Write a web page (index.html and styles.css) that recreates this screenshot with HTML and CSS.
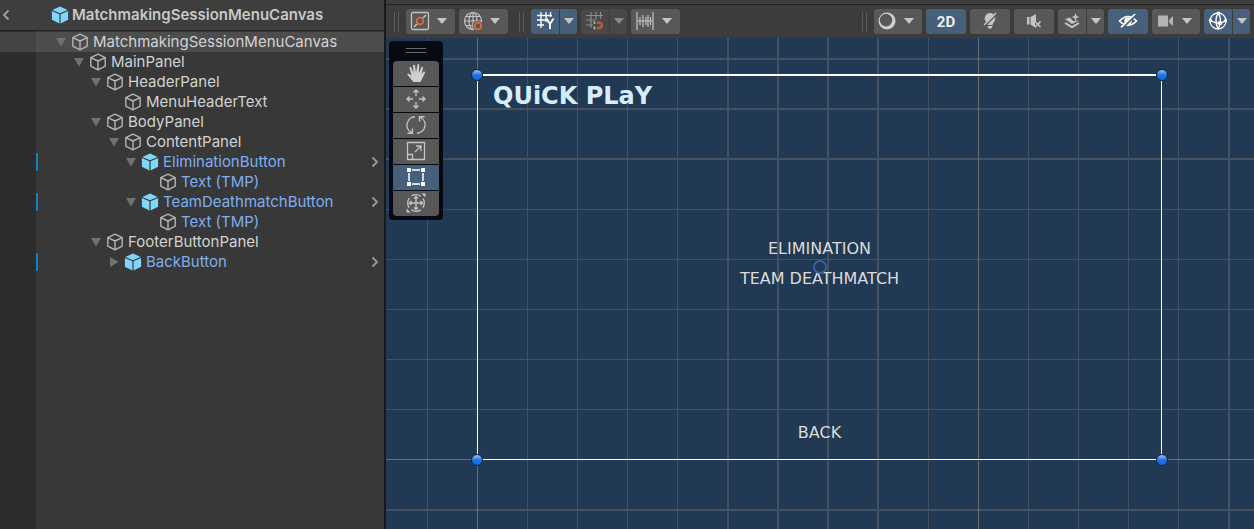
FILE: index.html
```html
<!DOCTYPE html>
<html lang="en">
<head>
<meta charset="utf-8">
<title>MatchmakingSessionMenuCanvas</title>
<link rel="stylesheet" href="styles.css">
</head>
<body>
<svg class="defs" aria-hidden="true">
  <symbol id="cube" viewBox="0 0 18 18"><path d="M9 1.2 16.2 4.6V13.2L9 16.8 1.8 13.2V4.6ZM1.8 4.6 9 8 16.2 4.6M9 8V16.8" fill="none" stroke="#b4b4b4" stroke-width="1.4" stroke-linejoin="round"/></symbol>
  <symbol id="prefab" viewBox="0 0 18 18"><path d="M9 .4 16.6 3.9 9 7.3 1.4 3.9ZM.9 5 8.4 8.3V17.5L.9 13.8ZM17.1 5 9.6 8.3V17.5L17.1 13.8Z" fill="#7fd6fd"/></symbol>
  <symbol id="down" viewBox="0 0 12 12"><path d="M1 2H11L6 10.500Z" fill="currentColor"/></symbol>
  <symbol id="right" viewBox="0 0 12 12"><path d="M2 1V11L10.500 6Z" fill="currentColor"/></symbol>
  <symbol id="chevron" viewBox="0 0 8 12"><path d="M1.500 1.500 6 6 1.500 10.500" fill="none" stroke="currentColor" stroke-width="1.800"/></symbol>
  <symbol id="caret" viewBox="0 0 12 8"><path d="M1 1H11L6 7Z" fill="currentColor"/></symbol>
</svg>
<div class="editor">
  <aside class="hierarchy">
    <header class="crumb">
      <button class="back" aria-label="Back"><svg class="chev flip"><use href="#chevron"/></svg></button>
      <svg class="icon"><use href="#prefab"/></svg>
      <h1 class="crumb-name">MatchmakingSessionMenuCanvas</h1>
    </header>
    <ul class="tree">
      <li class="row selected"><button class="fold" aria-label="Collapse"><svg><use href="#down"/></svg></button><svg class="icon"><use href="#cube"/></svg><span>MatchmakingSessionMenuCanvas</span></li>
      <li class="row level-1"><button class="fold" aria-label="Collapse"><svg><use href="#down"/></svg></button><svg class="icon"><use href="#cube"/></svg><span>MainPanel</span></li>
      <li class="row level-2"><button class="fold" aria-label="Collapse"><svg><use href="#down"/></svg></button><svg class="icon"><use href="#cube"/></svg><span>HeaderPanel</span></li>
      <li class="row level-3"><i class="fold"></i><svg class="icon"><use href="#cube"/></svg><span>MenuHeaderText</span></li>
      <li class="row level-2"><button class="fold" aria-label="Collapse"><svg><use href="#down"/></svg></button><svg class="icon"><use href="#cube"/></svg><span>BodyPanel</span></li>
      <li class="row level-3"><button class="fold" aria-label="Collapse"><svg><use href="#down"/></svg></button><svg class="icon"><use href="#cube"/></svg><span>ContentPanel</span></li>
      <li class="row level-4 prefab changed"><button class="fold" aria-label="Collapse"><svg><use href="#down"/></svg></button><svg class="icon"><use href="#prefab"/></svg><span>EliminationButton</span><button class="open" aria-label="Open prefab"><svg class="chev"><use href="#chevron"/></svg></button></li>
      <li class="row level-5 prefab"><i class="fold"></i><svg class="icon"><use href="#cube"/></svg><span>Text (TMP)</span></li>
      <li class="row level-4 prefab changed"><button class="fold" aria-label="Collapse"><svg><use href="#down"/></svg></button><svg class="icon"><use href="#prefab"/></svg><span>TeamDeathmatchButton</span><button class="open" aria-label="Open prefab"><svg class="chev"><use href="#chevron"/></svg></button></li>
      <li class="row level-5 prefab"><i class="fold"></i><svg class="icon"><use href="#cube"/></svg><span>Text (TMP)</span></li>
      <li class="row level-2"><button class="fold" aria-label="Collapse"><svg><use href="#down"/></svg></button><svg class="icon"><use href="#cube"/></svg><span>FooterButtonPanel</span></li>
      <li class="row level-3 prefab changed"><button class="fold" aria-label="Expand"><svg><use href="#right"/></svg></button><svg class="icon"><use href="#prefab"/></svg><span>BackButton</span><button class="open" aria-label="Open prefab"><svg class="chev"><use href="#chevron"/></svg></button></li>
    </ul>
  </aside>

  <main class="scene">
    <div class="toolbar">
      <div class="group">
        <i class="grip"></i>
        <button class="tool menu" aria-label="Pivot"><svg class="glyph" viewBox="0 0 20 20"><rect x="1.500" y="1.500" width="17" height="17" rx="1.500" fill="none" stroke="#c4c4c4" stroke-width="1.300"/><path d="M4 16 7 13M13 7 16 4" stroke="#c4c4c4" stroke-width="1.500"/><circle cx="10" cy="10" r="3.300" fill="none" stroke="#e5673f" stroke-width="1.700"/></svg><svg class="caret"><use href="#caret"/></svg></button>
        <button class="tool menu" aria-label="Handle rotation"><svg class="glyph" viewBox="0 0 20 20"><g fill="none" stroke="#c4c4c4" stroke-width="1.200"><circle cx="10" cy="10" r="8.500"/><ellipse cx="10" cy="10" rx="4" ry="8.500"/><path d="M1.500 10H18.500M3 5.500H17M3 14.500H12M10 1.500V18.500"/></g><circle cx="15" cy="15" r="5" fill="#585858"/><circle cx="15" cy="15" r="3.300" fill="none" stroke="#e5673f" stroke-width="1.800"/></svg><svg class="caret"><use href="#caret"/></svg></button>
      </div>
      <div class="group">
        <i class="grip"></i>
        <div class="split active"><button class="tool" aria-label="Grid"><svg class="glyph" viewBox="0 0 20 20"><path d="M6 1V17M11 1V11M15.500 1V6M2 4.500H17M2 9H12M2 14H9" fill="none" stroke="#fff" stroke-width="1.300"/><path d="M11.500 7.500 15 13 18.500 7.500M15 13V18" fill="none" stroke="#fff" stroke-width="2"/></svg></button><button class="tool drop" aria-label="Grid options"><svg class="caret"><use href="#caret"/></svg></button></div>
        <div class="split dim"><button class="tool" aria-label="Grid snapping"><svg class="glyph" viewBox="0 0 20 20"><path d="M6 1V17M11 1V9M15.500 1V8M1 4.500H18M1 9H10M1 14H8" fill="none" stroke="#8c8c8c" stroke-width="1.200"/><path d="M12 11.500H14.500A2.800 2.800 0 0 1 14.500 17H12" fill="none" stroke="#b05840" stroke-width="2.800"/><path d="M8.500 10.200H10.500V13H8.500ZM8.500 15.500H10.500V18.300H8.500Z" fill="#aaa"/></svg></button><button class="tool drop" aria-label="Snapping options"><svg class="caret"><use href="#caret"/></svg></button></div>
        <button class="tool menu" aria-label="Increment snap"><svg class="glyph" viewBox="0 0 20 20"><path d="M2 1V19M18 1V19M5 6V14M8 4V16M11 6V14M13 4V16M15.500 6V14M2 10H18" fill="none" stroke="#c4c4c4" stroke-width="1.200"/></svg><svg class="caret"><use href="#caret"/></svg></button>
      </div>
      <div class="group end">
        <i class="grip"></i>
        <button class="tool menu" aria-label="Draw mode"><svg class="glyph" viewBox="0 0 20 20"><path fill-rule="evenodd" d="M10 1.500A8.500 8.500 0 1 1 10 18.500 8.500 8.500 0 0 1 10 1.500M9 2.800A6.300 6.300 0 1 0 9 15.400 6.300 6.300 0 0 0 9 2.800" fill="#d0d0d0"/></svg><svg class="caret"><use href="#caret"/></svg></button>
        <button class="tool active two-d">2D</button>
        <button class="tool" aria-label="Lighting"><svg class="glyph" viewBox="0 0 20 20"><path d="M10 2A5.500 5.500 0 0 1 13.500 11.500L12.500 14H7.500L6.500 11.500A5.500 5.500 0 0 1 10 2M7.500 15H12.500L11.500 17.500H8.500Z" fill="#c4c4c4"/><path d="M5 15 17 3" stroke="#585858" stroke-width="1.500"/><path d="M4 14 16 2" stroke="#c4c4c4" stroke-width="1.500"/></svg></button>
        <button class="tool" aria-label="Audio"><svg class="glyph" viewBox="0 0 20 20"><path d="M3 6H5.500V13.500H3ZM6.500 6 12 3V17L6.500 13.500Z" fill="#c4c4c4"/><path d="M11 10.500H17V16.500H11Z" fill="#585858"/><path d="M11 10.500 16.500 16M16.500 10.500 11 16" stroke="#c4c4c4" stroke-width="1.600"/></svg></button>
        <div class="split"><button class="tool" aria-label="Effects"><svg class="glyph" viewBox="0 0 20 20"><path d="M3 8 8 6.500 11 10 17 9.500 10 13Z" fill="#c4c4c4"/><path d="M3 12 10 16 17 12" fill="none" stroke="#c4c4c4" stroke-width="2"/><path d="M13.500 2 14.600 4.900 17.500 6 14.600 7.100 13.500 10 12.400 7.100 9.500 6 12.400 4.900Z" fill="#c4c4c4"/></svg></button><button class="tool drop" aria-label="Effects options"><svg class="caret"><use href="#caret"/></svg></button></div>
        <button class="tool active" aria-label="Scene visibility"><svg class="glyph" viewBox="0 0 20 20"><path d="M1.500 10Q10 1 18.500 10 10 18.500 1.500 10Z" fill="none" stroke="#fff" stroke-width="1.700"/><circle cx="10" cy="10" r="3.800" fill="#fff"/><path d="M4.500 17 18 4" stroke="#46607c" stroke-width="1.800"/><path d="M3 16.300 17 3" stroke="#fff" stroke-width="1.600"/></svg></button>
        <button class="tool menu" aria-label="Camera"><svg class="glyph" viewBox="0 0 20 20"><path d="M3 4.500H13V15.500H3ZM14 9 18 5V15L14 11.500Z" fill="#b4b4b4"/></svg><svg class="caret"><use href="#caret"/></svg></button>
        <div class="split active"><button class="tool" aria-label="Gizmos"><svg class="glyph" viewBox="0 0 20 20"><g fill="none" stroke="#fff" stroke-width="1.300"><circle cx="10" cy="10" r="8"/><path d="M2 9.500Q11 14.500 18 9.500M10 2Q15 9 10 18M10 2Q6 9 10 18"/></g><circle cx="10.500" cy="2.300" r="1.800" fill="#fff"/><circle cx="2.500" cy="9.500" r="1.800" fill="#fff"/><circle cx="12" cy="12" r="2.200" fill="#fff"/><circle cx="17.500" cy="9.500" r="1.500" fill="#fff"/></svg></button><button class="tool drop" aria-label="Gizmo options"><svg class="caret"><use href="#caret"/></svg></button></div>
      </div>
    </div>

    <div class="viewport">
      <svg class="grid" aria-hidden="true" shape-rendering="crispEdges">
        <g fill="none" stroke="#455161">
          <path d="M41.500 0V900M141.500 0V900M191.500 0V900M241.500 0V900M291.500 0V900M542.500 0V900M642.500 0V900M692.500 0V900M742.500 0V900M792.500 0V900M0 171.500H2000M0 221.500H2000M0 271.500H2000M0 321.500H2000M0 371.500H2000"/>
          <path stroke-width="2" d="M342 0V900M392 0V900M442 0V900M492 0V900M843 0V900M0 21H2000M0 71H2000M0 121H2000M0 472H2000"/>
          <path stroke="#68707b" d="M91.500 0V900M592.500 0V900M0 421.500H2000"/>
        </g>
      </svg>
      <section class="canvas-rect">
        <h2 class="menu-title">QUiCK PLaY</h2>
        <div class="menu-body">
          <button class="menu-item">ELIMINATION</button>
          <button class="menu-item">TEAM DEATHMATCH</button>
        </div>
        <button class="menu-item">BACK</button>
        <i class="pivot"></i>
        <i class="handle top left"></i><i class="handle top right"></i>
        <i class="handle bottom left"></i><i class="handle bottom right"></i>
      </section>
      <div class="palette">
        <i class="palette-grip"></i>
        <button class="tool" aria-label="View"><svg class="glyph" viewBox="0 0 20 20"><path d="M7.500 19 2 12.500Q.5 10.500 2.500 10.500L5.500 12.500 3.500 5Q3.500 3.500 5 4L7.500 10 7 2.500Q7.800 1 9 2.500L10 9.500 11.500 1.500Q12.500.5 13.300 2L12.800 10 15.500 4Q17 3 17 5L15.500 11.500 17.500 8.500Q19.500 8 19 10L16 16 14.500 19Z" fill="#d0d0d0"/></svg></button>
        <button class="tool" aria-label="Move"><svg class="glyph" viewBox="0 0 20 20"><path d="M10 1V7M10 13V19M1 10H7M13 10H19M7.500 3.500 10 1 12.500 3.500M7.500 16.500 10 19 12.500 16.500M3.500 7.500 1 10 3.500 12.500M16.500 7.500 19 10 16.500 12.500" fill="none" stroke="#c4c4c4" stroke-width="1.300"/></svg></button>
        <button class="tool" aria-label="Rotate"><svg class="glyph" viewBox="0 0 20 20"><path d="M9 1.800A8.300 8.300 0 0 0 5.500 17.500M1.500 18.300H6.500V13.500M11 18.200A8.300 8.300 0 0 0 14.500 2.500M18.500 1.700H13.500V6.500" fill="none" stroke="#c4c4c4" stroke-width="1.400"/></svg></button>
        <button class="tool" aria-label="Scale"><svg class="glyph" viewBox="0 0 20 20"><path d="M1.500 1.500H18.500V18.500H1.500ZM1.500 13.500H6.500V18.500M9 11 14.500 5.500M10 5H15V10" fill="none" stroke="#c4c4c4" stroke-width="1.300"/></svg></button>
        <button class="tool active" aria-label="Rect"><svg class="glyph" viewBox="0 0 20 20"><path d="M6 3H14M6 17H14M3 6V14M17 6V14" stroke="#fff" stroke-width="1.500"/><path d="M1 1H5V5H1ZM15 1H19V5H15ZM1 15H5V19H1ZM15 15H19V19H15Z" fill="#fff"/></svg></button>
        <button class="tool" aria-label="Transform"><svg class="glyph" viewBox="0 0 20 20"><circle cx="10" cy="10" r="8.300" fill="none" stroke="#c4c4c4" stroke-width="1.300" stroke-dasharray="10 3.040" stroke-dashoffset="5"/><path d="M10 3V17M3 10H17M8 5.500 10 3.500 12 5.500M8 14.500 10 16.500 12 14.500M5.500 8 3.500 10 5.500 12M14.500 8 16.500 10 14.500 12" fill="none" stroke="#c4c4c4" stroke-width="1.400"/><path d="M15.500.5H19.500V4.500ZM.5 15.500V19.500H4.500Z" fill="#c4c4c4"/></svg></button>
      </div>
    </div>
  </main>
</div>
</body>
</html>
```
FILE: styles.css
```css
* { box-sizing: border-box; }
body { margin: 0; background: #383838; color: #d2d2d2; font: 15px/20px Inter, sans-serif; font-optical-sizing: none; }
button { margin: 0; padding: 0; border: 0; background: none; color: inherit; font: inherit; }
svg { display: block; flex: none; }
.defs { position: absolute; width: 0; height: 0; }
.editor { display: flex; height: 100vh; min-height: 320px; }

.hierarchy { flex: 0 0 386px; display: flex; flex-direction: column; border-right: 2px solid #191919; background: #383838; }
.crumb { display: flex; align-items: center; height: 31px; border-bottom: 1px solid #232323; background: #3e3e3e; }
.crumb-name { margin: 0 0 0 3px; font-size: 15px; font-weight: 600; color: #c8c8c8; }
.back { flex: 0 0 51px; padding-left: 2px; color: #a0a0a0; }
.icon { width: 18px; height: 18px; }
.chev { width: 8px; height: 12px; }
.flip { transform: rotate(180deg); }
.tree { flex: 1; margin: 0; padding: 1px 0 0; list-style: none; background: linear-gradient(to right, #2d2d2d 36px, #383838 36px); }
.row { display: flex; align-items: center; gap: 4px; height: 20px; padding: 0 5px 0 55px; white-space: nowrap; }
.row.selected { background: linear-gradient(to right, #444 36px, #4d4d4d 36px); }
.row.level-1 { padding-left: 73px; }
.row.level-2 { padding-left: 90px; }
.row.level-3 { padding-left: 108px; }
.row.level-4 { padding-left: 125px; }
.row.level-5 { padding-left: 143px; }
.row.prefab { color: #7faef0; }
.row.changed { background: linear-gradient(#0f81c4, #0f81c4) 36px 1px / 2px 18px no-repeat; }
.fold { flex: 0 0 12px; color: #727272; }
.fold svg { width: 12px; height: 12px; }
.open { margin-left: auto; color: #9c9c9c; }

.scene { flex: 1; min-width: 0; display: flex; flex-direction: column; }
.toolbar { display: flex; gap: 11px; height: 38px; padding: 4px 4px 3px 8px; border-top: 4px solid #3e3e3e; background: #3c3c3c; box-shadow: inset 0 1px #232323; }
.group { display: flex; gap: 4px; align-items: center; }
.group.end { margin-left: auto; }
.grip { width: 5px; height: 20px; margin-right: 3px; border: solid #5c5c5c; border-width: 0 1px; }
.tool { display: flex; align-items: center; justify-content: center; width: 40px; height: 25px; padding-bottom: 2px; border-radius: 3px; background: #585858; color: #c4c4c4; }
.menu { width: 49px; padding-right: 4px; gap: 6px; }
.end .menu { width: 48px; }
.glyph { width: 20px; height: 20px; }
.caret { width: 12px; height: 8px; }
.split { display: flex; gap: 1px; }
.split .tool { width: 28px; border-radius: 3px 0 0 3px; }
.split .drop { width: 17px; border-radius: 0 3px 3px 0; }
.active, .active .tool { background: #46607c; }
.split.active { background: none; }
.dim .tool { background: #484848; color: #888; }
.two-d { padding: 0; color: #eee; font: bold 15px/20px Roboto, sans-serif; }

.viewport { position: relative; flex: 1; overflow: hidden; background: #213952; }
.grid { position: absolute; inset: 0; width: 100%; height: 100%; }
.palette { position: absolute; left: 3px; top: 3px; display: flex; flex-direction: column; gap: 1px; padding: 7px 4px 4px; border-radius: 4px; background: #060a12; }
.palette-grip { width: 20px; height: 5px; margin: 0 auto 7px; border: solid #696969; border-width: 1px 0; }
.palette .tool { width: 46px; border-radius: 0; }
.palette .tool:nth-of-type(1) { border-radius: 4px 4px 0 0; }
.palette .tool:last-child { border-radius: 0 0 4px 4px; }

.canvas-rect { position: absolute; left: 91px; top: 36px; width: 685px; height: 386px; display: flex; flex-direction: column; align-items: center; padding: 4px 15px 16px; border: 1px solid #fff; border-top-width: 2px; font-family: "DejaVu Sans", sans-serif; color: #dcdcdc; }
.menu-title { align-self: flex-start; margin: 0; font-size: 24px; line-height: 32px; font-weight: bold; color: #d5edff; }
.menu-body { flex: 1; display: flex; flex-direction: column; justify-content: center; gap: 10px; padding-bottom: 8px; }
.menu-item { font-size: 16px; line-height: 20px; }
.pivot { position: absolute; left: 50%; top: 50%; width: 14px; height: 14px; margin: -8px -7px; border: 2px solid #2f62a6; border-radius: 50%; }
.handle { position: absolute; width: 12px; height: 12px; border: 1px solid #13243c; border-radius: 50%; background: linear-gradient(#9cc5f5, #1f73e6 50%, #1667dc); }
.handle.top { top: -7px; }
.handle.bottom { bottom: -7px; }
.handle.left { left: -7px; }
.handle.right { right: -7px; }
```
